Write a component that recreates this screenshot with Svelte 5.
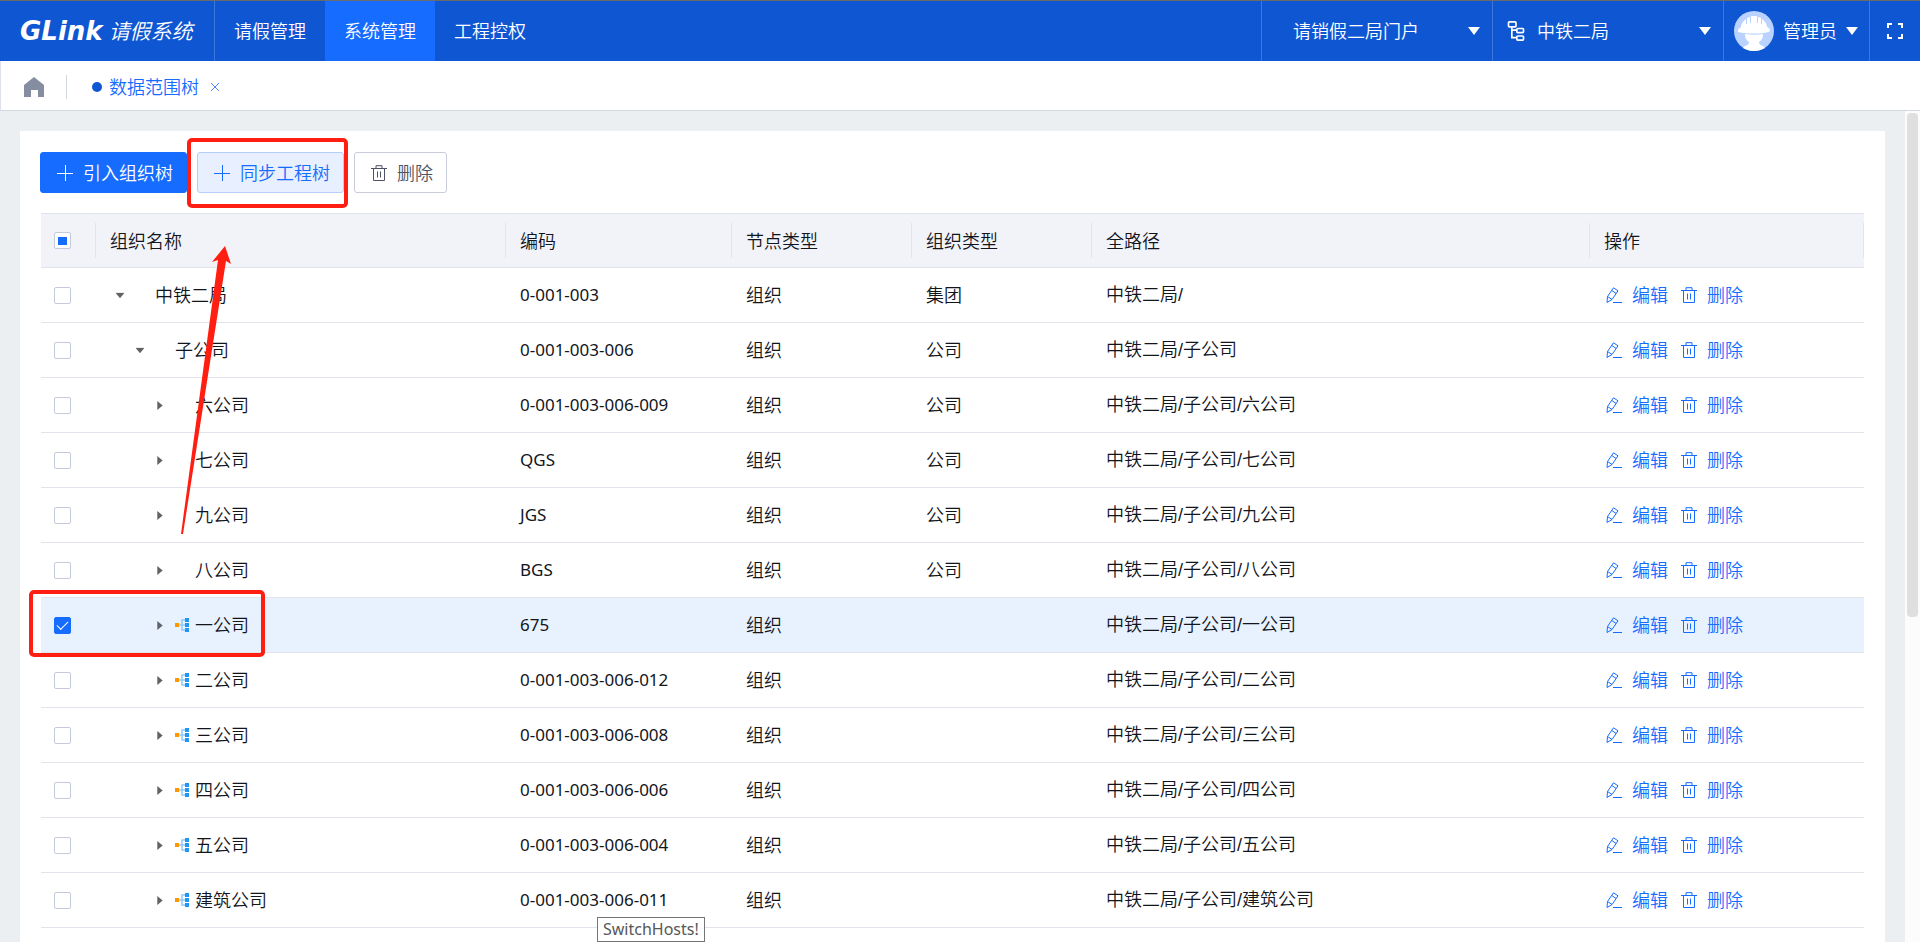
<script>
	const menus = ['请假管理', '系统管理', '工程控权'];
	let activeMenu = '系统管理';

	const columns = [
		{ title: '组织名称', key: 'name' },
		{ title: '编码', key: 'code' },
		{ title: '节点类型', key: 'kind' },
		{ title: '组织类型', key: 'type' },
		{ title: '全路径', key: 'path' },
		{ title: '操作', key: 'action' }
	];

	let rows = [
		{ name: '中铁二局', level: 0, open: true, code: '0-001-003', type: '集团', path: '中铁二局/' },
		{ name: '子公司', level: 1, open: true, code: '0-001-003-006', type: '公司' },
		{ name: '六公司', level: 2, code: '0-001-003-006-009', type: '公司' },
		{ name: '七公司', level: 2, code: 'QGS', type: '公司' },
		{ name: '九公司', level: 2, code: 'JGS', type: '公司' },
		{ name: '八公司', level: 2, code: 'BGS', type: '公司' },
		{ name: '一公司', level: 2, code: '675', icon: true, checked: true },
		{ name: '二公司', level: 2, code: '0-001-003-006-012', icon: true },
		{ name: '三公司', level: 2, code: '0-001-003-006-008', icon: true },
		{ name: '四公司', level: 2, code: '0-001-003-006-006', icon: true },
		{ name: '五公司', level: 2, code: '0-001-003-006-004', icon: true },
		{ name: '建筑公司', level: 2, code: '0-001-003-006-011', icon: true }
	].map((row) => ({ checked: false, open: false, ...row }));

	$: checkedCount = rows.filter((row) => row.checked).length;
	$: allChecked = checkedCount === rows.length;

	const fullPath = (row) => {
		if (row.path) return row.path;
		return row.level === 1 ? `中铁二局/${row.name}` : `中铁二局/子公司/${row.name}`;
	};

	const toggleAll = (event) => {
		rows = rows.map((row) => ({ ...row, checked: event.target.checked }));
	};
</script>

<div class="app">
	<header class="topbar">
		<a class="brand" href="#home"><b>GLink</b><span>请假系统</span></a>
		<nav class="menu">
			{#each menus as menu}
				<a href="#menu" class:active={menu === activeMenu} on:click={() => (activeMenu = menu)}>{menu}</a>
			{/each}
		</nav>
		<div class="picker portal">
			<select aria-label="门户">
				<option>请销假二局门户</option>
			</select>
			<svg class="down" viewBox="0 0 12 8"><path d="M0 0h12L6 8z" /></svg>
		</div>
		<div class="picker company">
			<svg class="org" viewBox="0 0 20 24">
				<rect x="1" y="1" width="9" height="6" rx="1" />
				<rect x="11" y="9" width="8" height="5" rx="1" />
				<rect x="11" y="18" width="8" height="5" rx="1" />
				<path d="M5 7v13h6M5 11h6" />
			</svg>
			<select aria-label="组织">
				<option>中铁二局</option>
			</select>
			<svg class="down" viewBox="0 0 12 8"><path d="M0 0h12L6 8z" /></svg>
		</div>
		<button class="user">
			<svg class="avatar" viewBox="0 0 40 40">
				<circle cx="20" cy="20" r="20" fill="#b9d2ff" />
				<path
					fill="#fff"
					d="M4 19c1-2 2-2 3-3c0-3 2-6 5-8v5h1V7l3-1v6h1V5h6v7h1V6l3 1v6h1V8c3 2 5 5 5 8c1 1 3 1 3 3l-1 2c-10 2-21 2-31 0z"
				/>
				<path fill="#fff" d="M11 23c6 1 12 1 18 0c0 4-1 6-4 8c0 2 1 3 4 4l2 2c-7 4-15 4-22 0l2-2c3-1 4-2 4-4c-3-2-4-4-4-8z" />
			</svg>
			<span>管理员</span>
			<svg class="down" viewBox="0 0 12 8"><path d="M0 0h12L6 8z" /></svg>
		</button>
		<button class="full" aria-label="全屏">
			<svg viewBox="0 0 16 16"><path d="M1 5V1h4M11 1h4v4M15 11v4h-4M5 15H1v-4" /></svg>
		</button>
	</header>

	<div class="tabs">
		<a class="home" href="#home" aria-label="首页">
			<svg viewBox="0 0 20 20"><path d="M10 0l10 8v12h-6v-7H7v7H0V8z" /></svg>
		</a>
		<a class="tab" href="#tree"><i></i>数据范围树</a>
		<button class="close" aria-label="关闭">
			<svg viewBox="0 0 10 10"><path d="M1 1l8 8M9 1L1 9" /></svg>
		</button>
	</div>

	<div class="body">
		<main class="card">
			<div class="toolbar">
				<button class="btn primary">
					<svg viewBox="0 0 16 16"><path d="M0 8.500h16M8.500 0v16" /></svg>引入组织树
				</button>
				<button class="btn plain">
					<svg viewBox="0 0 16 16"><path d="M0 8.500h16M8.500 0v16" /></svg>同步工程树
				</button>
				<button class="btn">
					<svg viewBox="0 0 16 16"><path d="M0 3.500h16M5 3V.7h6V3M2.500 4v11.500h11V4M6.500 6.500v6M9.500 6.500v6" /></svg>删除
				</button>
			</div>

			<table>
				<thead>
					<tr>
						<th class="check">
							<input
								type="checkbox"
								aria-label="全选"
								checked={allChecked}
								indeterminate={checkedCount > 0 && !allChecked}
								on:change={toggleAll}
							/>
						</th>
						{#each columns as column}
							<th class={column.key}>{column.title}</th>
						{/each}
					</tr>
				</thead>
				<tbody>
					{#each rows as row}
						<tr class:selected={row.checked}>
							<td class="check">
								<input type="checkbox" aria-label={row.name} bind:checked={row.checked} />
							</td>
							<td>
								<div class="node level-{row.level}">
									<button class="caret" class:open={row.open} aria-label="展开" on:click={() => (row.open = !row.open)}>
										<svg viewBox="0 0 6 10"><path d="M0 0l6 5l-6 5z" /></svg>
									</button>
									<span class="mark">
										{#if row.icon}
											<svg viewBox="0 0 14 14">
												<path d="M4 7h6M10 2H7v10h3" fill="none" stroke="#90caf9" stroke-width="1.500" />
												<path d="M0 5h4v4H0z" fill="#ff9800" />
												<path d="M10 0h4v4h-4zM10 5h4v4h-4zM10 10h4v4h-4z" fill="#2196f3" />
											</svg>
										{/if}
									</span>
									<span>{row.name}</span>
								</div>
							</td>
							<td class="num">{row.code}</td>
							<td>组织</td>
							<td>{row.type ?? ''}</td>
							<td class="full-path">{fullPath(row)}</td>
							<td>
								<div class="actions">
									<button>
										<svg viewBox="0 0 16 16">
											<path d="M1.500 9.500L7.500 .8l4.500 3L6 12.500L1 15.500zM5.800 3.500l4.300 3M1.500 9.500l4.500 3M7 15.500h9" />
										</svg>编辑
									</button>
									<button>
										<svg viewBox="0 0 16 16">
											<path d="M0 3.500h16M5 3V.7h6V3M2.500 4v11.500h11V4M6.500 6.500v6M9.500 6.500v6" />
										</svg>删除
									</button>
								</div>
							</td>
						</tr>
					{/each}
				</tbody>
			</table>
		</main>
		<div class="scroll"><i></i></div>
	</div>

	<div class="frame frame-button"></div>
	<div class="frame frame-row"></div>
	<svg class="arrow" viewBox="0 0 50 288">
		<path fill="#ff1f12" d="M44 0l6 18l-5-3L2 288H0L37 14l-6 2z" />
	</svg>
	<div class="tip">SwitchHosts!</div>
</div>

<style>
	:global(body) {
		overflow: hidden;
	}

	.app {
		position: relative;
		display: flex;
		flex-direction: column;
		height: 100vh;
		overflow: hidden;
		box-sizing: border-box;
		border-top: 1px solid #6b6b6b;
		background-color: #ebeff2;
		color: #12151c;
		font: 350 18px/24px 'Noto Sans', 'Noto Sans CJK SC', sans-serif;
	}

	.app * {
		box-sizing: border-box;
	}

	a {
		color: inherit;
		text-decoration: none;
	}

	button,
	select {
		margin: 0;
		padding: 0;
		border: 0;
		background: none;
		color: inherit;
		font: inherit;
		cursor: pointer;
	}

	svg {
		display: block;
		flex: none;
	}

	.topbar {
		display: flex;
		flex: none;
		height: 60px;
		background-color: #0f56d3;
		color: #fff;
	}

	.brand {
		display: flex;
		align-items: center;
		gap: 6px;
		width: 215px;
		padding-left: 20px;
		border-right: 1px solid #3f78dc;
		font-style: italic;
		white-space: nowrap;
	}

	.brand b {
		font: italic 900 26px/30px 'DejaVu Sans', sans-serif;
	}

	.brand span {
		font-size: 21px;
	}

	.menu {
		display: flex;
		flex: 1;
	}

	.menu a {
		display: flex;
		align-items: center;
		padding: 0 19px;
	}

	.menu .active {
		background-color: #166cff;
	}

	.picker,
	.user,
	.full {
		display: flex;
		align-items: center;
		border-left: 1px solid #3f78dc;
	}

	.picker {
		width: 231px;
		padding-right: 12px;
	}

	.portal {
		padding-left: 31px;
	}

	.company {
		padding-left: 13px;
		gap: 11px;
	}

	.picker select {
		flex: 1;
		min-width: 0;
		appearance: none;
		outline: none;
	}

	.picker option {
		color: #1d2129;
	}

	.down {
		width: 12px;
		height: 8px;
		fill: #fff;
	}

	.org {
		width: 20px;
		height: 20px;
		fill: none;
		stroke: #fff;
		stroke-width: 2;
	}

	.user {
		width: 146px;
		padding-left: 10px;
		gap: 9px;
	}

	.avatar {
		width: 40px;
		height: 40px;
	}

	.full {
		width: 51px;
		padding-left: 17px;
	}

	.full svg {
		width: 16px;
		height: 16px;
		fill: none;
		stroke: #fff;
		stroke-width: 2;
	}

	.tabs {
		display: flex;
		flex: none;
		align-items: center;
		height: 50px;
		padding: 2px 0 0 23px;
		border-bottom: 1px solid #d3d8de;
		border-left: 1px solid #dde1ee;
		background-color: #fff;
		color: #166cff;
	}

	.home {
		padding: 2px 22px 2px 0;
		border-right: 1px solid #d3d8de;
	}

	.home svg {
		width: 20px;
		height: 20px;
		fill: #858ea1;
	}

	.tab {
		display: flex;
		align-items: center;
		gap: 7px;
		margin-left: 25px;
	}

	.tab i {
		width: 10px;
		height: 10px;
		border-radius: 50%;
		background-color: #0f56d3;
	}

	.close {
		margin-left: 11px;
	}

	.close svg {
		width: 10px;
		height: 10px;
		fill: none;
		stroke: #4a87f5;
	}

	.body {
		display: flex;
		flex: 1;
		min-height: 0;
	}

	.card {
		flex: 1;
		min-width: 0;
		margin: 20px 20px 0;
		padding: 21px 21px 0 20px;
		background-color: #fff;
	}

	.scroll {
		width: 15px;
		padding: 2px;
		background-color: #fcfcfc;
	}

	.scroll i {
		display: block;
		height: 61%;
		border-radius: 4px;
		background-color: #dfdfdf;
	}

	.toolbar {
		display: flex;
		gap: 10px;
	}

	.btn {
		display: flex;
		align-items: center;
		gap: 10px;
		height: 41px;
		padding: 0 13px 0 16px;
		border: 1px solid #c8ccda;
		border-radius: 3px;
		color: #4e5361;
	}

	.btn svg {
		width: 16px;
		height: 16px;
		fill: none;
		stroke: currentColor;
	}

	.primary {
		border-color: #166cff;
		background-color: #166cff;
		color: #fff;
	}

	.plain {
		border-color: #b4cefb;
		background-color: #e8effe;
		color: #166cff;
	}

	table {
		width: calc(100% - 1px);
		margin: 20px 0 0 1px;
		border-collapse: separate;
		border-spacing: 0;
		table-layout: fixed;
	}

	th,
	td {
		height: 55px;
		padding: 0 14px;
		border-bottom: 1px solid #e2e4ec;
		text-align: left;
		font-weight: 350;
		white-space: nowrap;
	}

	th {
		border-top: 1px solid #dfe2e8;
		background: linear-gradient(#e2e4ea, #e2e4ea) right center / 1px 35px no-repeat #f2f3f8;
	}

	.check {
		width: 55px;
		padding: 0 0 0 13px;
	}

	.name {
		width: 410px;
	}

	.code {
		width: 226px;
	}

	.kind,
	.type {
		width: 180px;
	}

	.action {
		width: 274px;
	}

	.num {
		font-size: 17px;
		font-weight: 400;
	}

	.full-path {
		font-family: 'Liberation Sans', 'Noto Sans CJK SC', sans-serif;
	}

	.selected td {
		background-color: #e8f2ff;
	}

	input {
		display: grid;
		place-items: center;
		width: 17px;
		height: 17px;
		margin: 0;
		appearance: none;
		border: 1px solid #c4cadb;
		border-radius: 2px;
		background-color: #fff;
	}

	input:indeterminate::before {
		width: 9px;
		height: 8px;
		background-color: #166cff;
		content: '';
	}

	input:checked {
		border-color: #166cff;
		background-color: #166cff;
	}

	input:checked::before {
		width: 10px;
		height: 5px;
		border-bottom: 1px solid #fff;
		border-left: 1px solid #fff;
		transform: translateY(-1px) rotate(-45deg);
		content: '';
	}

	.node {
		display: flex;
		align-items: center;
	}

	.level-1 {
		padding-left: 20px;
	}

	.level-2 {
		padding-left: 40px;
	}

	.caret {
		display: grid;
		place-items: center;
		width: 20px;
		height: 20px;
	}

	.caret svg {
		width: 6px;
		height: 9px;
		fill: #606266;
	}

	.caret.open svg {
		transform: rotate(90deg);
	}

	.mark {
		width: 14px;
		margin: 0 6px 0 5px;
	}

	.mark svg {
		width: 14px;
		height: 14px;
	}

	.actions {
		display: flex;
		gap: 13px;
		padding-left: 2px;
		color: #166cff;
	}

	.actions button {
		display: flex;
		align-items: center;
		gap: 10px;
	}

	.actions svg {
		width: 16px;
		height: 16px;
		fill: none;
		stroke: currentColor;
	}

	/* guide marks drawn over the page */
	.frame {
		position: absolute;
		border: 4px solid #ff1f12;
		border-radius: 5px;
		pointer-events: none;
	}

	.frame-button {
		top: 137px;
		left: 187px;
		width: 161px;
		height: 70px;
	}

	.frame-row {
		top: 589px;
		left: 29px;
		width: 236px;
		height: 67px;
	}

	.arrow {
		position: absolute;
		top: 245px;
		left: 181px;
		width: 50px;
		height: 288px;
		pointer-events: none;
	}

	.tip {
		position: absolute;
		bottom: 0;
		left: 597px;
		padding: 0 5px;
		border: 1px solid #767676;
		background-color: #fff;
		color: #575757;
		font-size: 16px;
		font-weight: 400;
		line-height: 23px;
	}
</style>
